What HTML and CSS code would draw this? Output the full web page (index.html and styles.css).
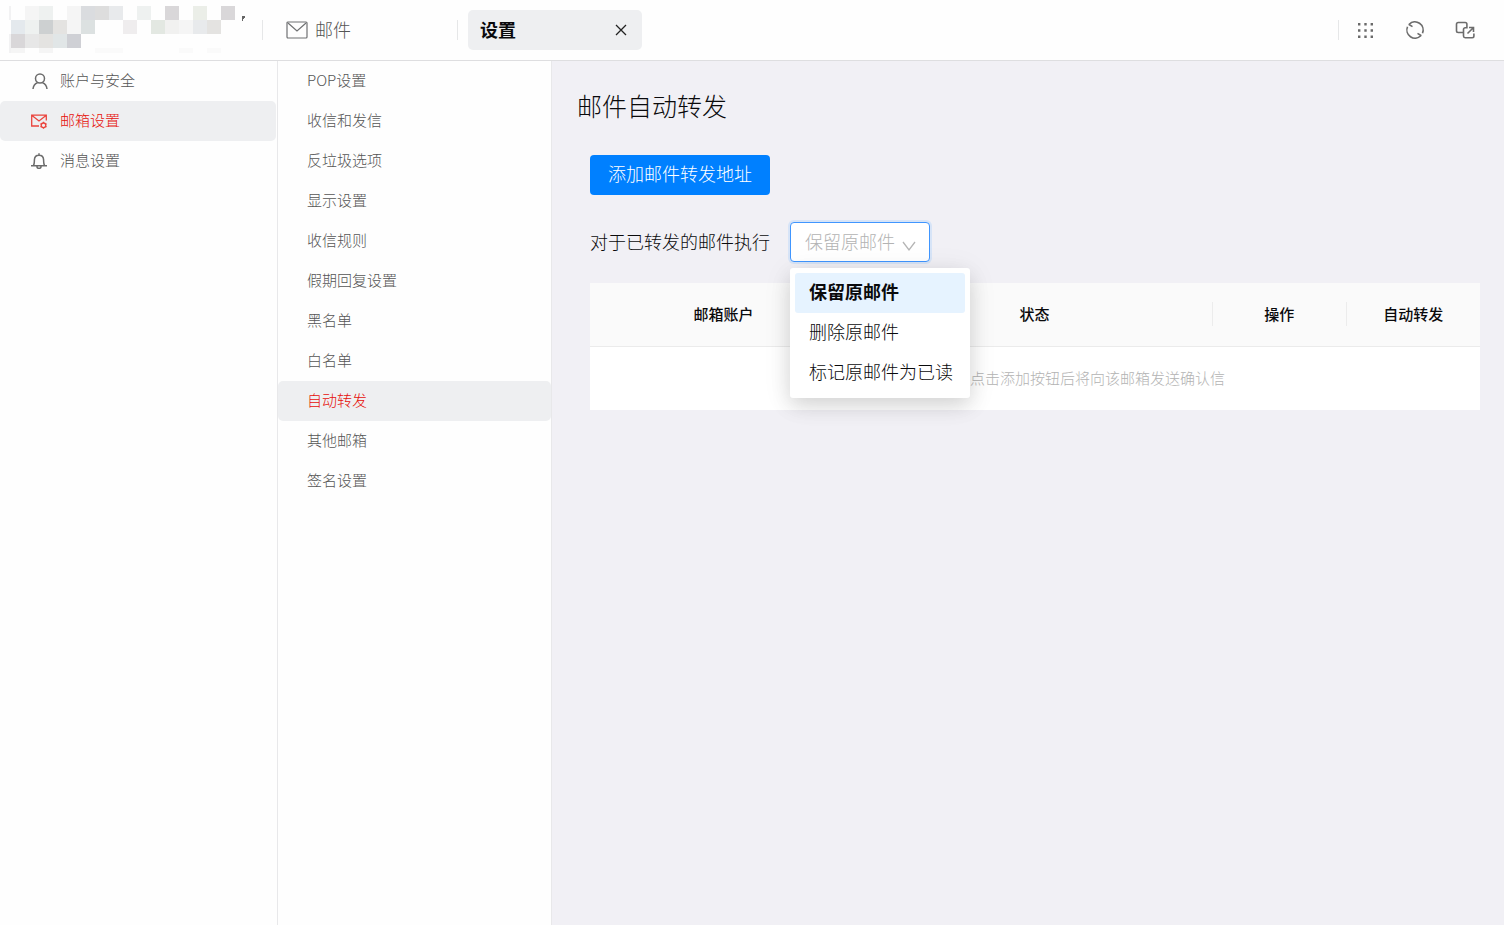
FILE: index.html
```html
<!DOCTYPE html>
<html lang="zh-CN">
<head>
<meta charset="utf-8">
<meta name="viewport" content="width=device-width, initial-scale=1">
<title>邮件自动转发</title>
<link rel="stylesheet" href="styles.css">
</head>
<body>
<header class="topbar">
  <div class="brand">
    <svg class="brand-logo" width="240" height="48" viewBox="0 0 240 48" shape-rendering="crispEdges" aria-hidden="true">
      <path fill="#f2f2f3" d="M0 0h2v14H0zM0 28h2v19H0z"/>
      <path fill="#f5f5f5" d="M16 0h14v14H16zM58 0h14v28H58zM170 14h14v14H170zM2 42h14v5H2zM30 42h14v5H30z"/>
      <path fill="#eef1f0" d="M30 0h14v14H30zM128 0h14v14H128zM16 14h14v14H16z"/>
      <path fill="#dadcdf" d="M72 0h14v14H72z"/>
      <path fill="#dddddd" d="M86 0h14v14H86z"/>
      <path fill="#e8eaec" d="M100 0h14v14H100zM184 14h14v14H184z"/>
      <path fill="#d9d7d9" d="M156 0h14v14H156zM212 0h14v14H212zM2 28h14v14H2z"/>
      <path fill="#ebeee8" d="M184 0h14v14H184z"/>
      <path fill="#e4e9ed" d="M2 14h14v14H2z"/>
      <path fill="#cdd0d1" d="M30 14h14v14H30z"/>
      <path fill="#e4e3e1" d="M44 14h14v14H44zM30 28h14v14H30zM198 14h14v14H198z"/>
      <path fill="#dce1e1" d="M72 14h14v14H72z"/>
      <path fill="#efedee" d="M114 14h14v14H114z"/>
      <path fill="#e3e8e2" d="M142 14h14v14H142z"/>
      <path fill="#f1f1f0" d="M156 14h14v14H156z"/>
      <path fill="#e7e7e7" d="M16 28h14v14H16z"/>
      <path fill="#e1e6e7" d="M44 28h14v14H44z"/>
      <path fill="#cfd0d5" d="M58 28h14v14H58z"/>
      <path fill="#fafafa" d="M86 42h28v5H86zM170 42h14v5H170zM198 42h14v5H198z"/>
      <path fill="#666" d="M233 10h3v2h-1v1h-1v2h-1z"/>
    </svg>
  </div>
  <nav class="tabs" aria-label="标签页">
    <button class="tab" type="button">
      <svg width="22" height="18" viewBox="0 0 22 18" fill="none" stroke="#6f7072" stroke-width="1.2" aria-hidden="true"><rect x="1" y="1" width="20" height="16" rx="1"/><path d="M2 2l9 8 9-8"/></svg>
      <span class="tab-label">邮件</span>
    </button>
    <div class="tab-current">
      <span class="tab-label">设置</span>
      <button class="tab-close" type="button" aria-label="关闭">
        <svg width="12" height="12" viewBox="0 0 12 12" stroke="#222" stroke-width="1.3" aria-hidden="true"><path d="M1 1l10 10M11 1L1 11"/></svg>
      </button>
    </div>
  </nav>
  <div class="tools">
    <button class="tool" type="button" aria-label="应用">
      <svg width="20" height="20" viewBox="0 0 20 20" fill="#6a6a6a" aria-hidden="true"><path d="M3 3h2.400v2.400H3zM9.300 3h2.400v2.400H9.300zM15.600 3H18v2.400h-2.400zM3 9.300h2.400v2.400H3zM9.300 9.300h2.400v2.400H9.300zM15.600 9.300H18v2.400h-2.400zM3 15.600h2.400V18H3zM9.300 15.600h2.400V18H9.300zM15.600 15.600H18V18h-2.400z"/></svg>
    </button>
    <button class="tool" type="button" aria-label="刷新">
      <svg width="20" height="20" viewBox="0 0 20 20" fill="none" stroke="#6c6c6c" stroke-width="1.600" aria-hidden="true"><path d="M4.200 4.200A8.200 8.200 0 0 1 17.500 13.200M15.800 15.800A8.200 8.200 0 0 1 2.500 6.800"/><path d="M3.600 4.300L7.500 6.600M16.400 15.700L12.500 13.400"/></svg>
    </button>
    <button class="tool" type="button" aria-label="切换窗口">
      <svg width="20" height="20" viewBox="0 0 20 20" fill="none" stroke="#6c6c6c" stroke-width="1.600" aria-hidden="true"><path d="M8 12.500H3.200A1.700 1.700 0 0 1 1.500 10.800V4.200A1.700 1.700 0 0 1 3.200 2.500h7A1.700 1.700 0 0 1 11.900 4.200V7.700H10.200A1.700 1.700 0 0 0 8.500 9.400v6.600A1.700 1.700 0 0 0 10.200 17.700h7a1.700 1.700 0 0 0 1.700-1.700V13.500"/><path d="M12.500 13.500L18.300 7.700M14 7.500h4.500V12"/></svg>
    </button>
  </div>
</header>
<div class="workspace">
  <nav class="sidebar sidebar-main" aria-label="设置分类">
    <a class="item" href="#account">
      <svg width="18" height="18" viewBox="0 0 18 18" fill="none" stroke="#6c6c6c" stroke-width="1.500" aria-hidden="true"><circle cx="10" cy="7.500" r="4.500"/><path d="M3 18c.4-3.500 2-5.300 4.500-6.200M17 18c-.4-3.500-2-5.300-4.500-6.200"/></svg>
      <span>账户与安全</span>
    </a>
    <a class="item item-active" href="#mailbox" aria-current="true">
      <svg width="18" height="18" viewBox="0 0 18 18" fill="none" stroke="#ea443d" stroke-width="1.300" aria-hidden="true"><path d="M9 15H1.700V4.200h14.600V9.500M2 4.500l7 5.500 7-5.500"/><circle cx="13.500" cy="14.300" r="2.300"/><path d="M13.500 10.800v1.200M13.500 16.600v1.200M10.500 12.600l1 .6M15.500 15.400l1 .6M16.500 12.600l-1 .6M11.500 15.400l-1 .6"/></svg>
      <span>邮箱设置</span>
    </a>
    <a class="item" href="#message">
      <svg width="18" height="18" viewBox="0 0 18 18" fill="none" stroke="#6c6c6c" stroke-width="1.500" aria-hidden="true"><path d="M1 14.800h16M3.500 14.500c1-1.500.8-3.500.9-5.600C4.500 6 6.500 4.200 9 4.200s4.500 1.800 4.600 4.700c.1 2.100-.1 4.100.9 5.600M9 2.200v2M6.800 15.500c.3 1.300 1.100 2 2.200 2s1.900-.7 2.200-2"/></svg>
      <span>消息设置</span>
    </a>
  </nav>
  <nav class="sidebar sidebar-sub" aria-label="邮箱设置">
    <a class="item" href="#pop">POP设置</a>
    <a class="item" href="#send">收信和发信</a>
    <a class="item" href="#spam">反垃圾选项</a>
    <a class="item" href="#display">显示设置</a>
    <a class="item" href="#rules">收信规则</a>
    <a class="item" href="#vacation">假期回复设置</a>
    <a class="item" href="#black">黑名单</a>
    <a class="item" href="#white">白名单</a>
    <a class="item item-active" href="#forward" aria-current="page">自动转发</a>
    <a class="item" href="#others">其他邮箱</a>
    <a class="item" href="#sign">签名设置</a>
  </nav>
  <main class="content">
    <h1 class="title">邮件自动转发</h1>
    <div class="panel">
      <button class="primary" type="button">添加邮件转发地址</button>
      <div class="field">
        <label class="field-label" for="action">对于已转发的邮件执行</label>
        <div class="picker">
          <select class="picker-select" id="action"><option>保留原邮件</option></select>
          <svg class="picker-arrow" width="14" height="14" viewBox="0 0 14 14" fill="none" stroke="#b5b5b5" stroke-width="1.300" aria-hidden="true"><path d="M1 3l6 8 6-8"/></svg>
          <div class="menu" role="listbox" aria-label="对于已转发的邮件执行">
            <button class="option option-selected" type="button" role="option" aria-selected="true">保留原邮件</button>
            <button class="option" type="button" role="option" aria-selected="false">删除原邮件</button>
            <button class="option" type="button" role="option" aria-selected="false">标记原邮件为已读</button>
          </div>
        </div>
      </div>
      <table class="table">
        <colgroup><col class="col-account"><col class="col-status"><col class="col-small"><col class="col-small"></colgroup>
        <thead>
          <tr>
            <th scope="col"><div class="head">邮箱账户</div></th>
            <th scope="col"><div class="head head-split">状态</div></th>
            <th scope="col"><div class="head head-split">操作</div></th>
            <th scope="col"><div class="head">自动转发</div></th>
          </tr>
        </thead>
        <tbody>
          <tr><td class="empty" colspan="4">点击添加按钮后将向该邮箱发送确认信</td></tr>
        </tbody>
      </table>
    </div>
  </main>
</div>
</body>
</html>
```
FILE: styles.css
```css
* { box-sizing: border-box; }

body {
  margin: 0;
  min-height: 100vh;
  display: flex;
  flex-direction: column;
  background: #fefefe;
  color: #0a0a0c;
  font-family: "Noto Sans CJK SC", sans-serif;
  font-size: 15px;
  font-weight: 300;
}

button, select {
  font: inherit;
  color: inherit;
  border: 0;
  padding: 0;
  background: none;
}

svg { display: block; flex: none; }

.topbar {
  display: flex;
  align-items: center;
  height: 61px;
  border-bottom: 1px solid #dedee0;
}

.brand {
  width: 262px;
  padding: 6px 9px;
  flex: none;
}

.tabs {
  display: flex;
  align-items: center;
  flex: 1;
  font-size: 18px;
}

.tab {
  display: flex;
  align-items: center;
  gap: 7px;
  width: 196px;
  height: 20px;
  padding-left: 23px;
  border-left: 1px solid #e6e7e8;
  border-right: 1px solid #e6e7e8;
  color: #555;
}

.tab-label { padding-bottom: 2px; }

.tab-current {
  display: flex;
  align-items: center;
  justify-content: space-between;
  width: 174px;
  height: 40px;
  margin-left: 10px;
  padding: 0 15px 0 12px;
  border-radius: 5px;
  background: #eeeff1;
  font-weight: 700;
}

.tools {
  display: flex;
  gap: 30px;
  padding: 0 29px 0 16px;
  border-left: 1px solid #e6e7e8;
}

.workspace {
  display: flex;
  flex: 1;
}

.sidebar {
  flex: none;
  border-right: 1px solid #e8e8ea;
}

.sidebar-main { width: 278px; padding-right: 1px; }
.sidebar-sub { width: 274px; }

.item {
  display: flex;
  align-items: center;
  gap: 12px;
  height: 40px;
  padding: 0 30px 3px;
  border-radius: 5px;
  color: #555;
  text-decoration: none;
}

.sidebar-sub .item { padding-left: 29px; }

.sidebar .item-active {
  background: #eeeff1;
  color: #e60f0a;
}

.content {
  flex: 1;
  min-width: 0;
  padding: 24px 24px 24px 25px;
  background: #f1f0f5;
}

.title {
  margin: 0;
  font-size: 25px;
  line-height: 40px;
  font-weight: 300;
}

.panel { padding: 30px 0 0 13px; }

.primary {
  width: 180px;
  height: 40px;
  padding-bottom: 4px;
  border-radius: 4px;
  background: #0080ff;
  color: #fff;
  font-size: 18px;
  white-space: nowrap;
}

.field {
  display: flex;
  align-items: center;
  gap: 20px;
  margin: 27px 0 21px;
  font-size: 18px;
}

.field-label { padding-bottom: 2px; }

.picker {
  position: relative;
  width: 140px;
}

.picker-select {
  display: block;
  width: 100%;
  height: 40px;
  padding: 0 14px 2px;
  appearance: none;
  border: 1px solid #4096ff;
  border-radius: 4px;
  background: #fff;
  box-shadow: 0 0 0 2px #d7e4f7;
  color: #b3b3b3;
}

.picker-arrow {
  position: absolute;
  right: 14px;
  top: 17px;
  pointer-events: none;
}

.menu {
  position: absolute;
  top: 46px;
  left: 0;
  z-index: 1;
  width: 180px;
  padding: 5px;
  border-radius: 3px;
  background: #fff;
  box-shadow: 0 8px 20px rgba(0, 0, 0, 0.12), 0 4px 30px rgba(0, 0, 0, 0.08);
}

.option {
  display: block;
  width: 100%;
  height: 40px;
  padding: 0 0 4px 14px;
  border-radius: 3px;
  text-align: left;
  white-space: nowrap;
}

.option-selected {
  background: #e6f3ff;
  font-weight: 700;
}

.table {
  width: 100%;
  table-layout: fixed;
  border-collapse: separate;
  border-spacing: 0;
  background: #fff;
}

.col-account { width: 30%; }
.col-status { width: 40%; }
.col-small { width: 15%; }

.table th {
  height: 64px;
  padding: 0 0 2px;
  border-bottom: 1px solid #ebebeb;
  background: #fafafa;
  font-weight: 500;
}

.head { line-height: 24px; }
.head-split { border-right: 1px solid #ececec; }

.empty {
  height: 63px;
  padding: 0 0 2px 125px;
  color: #b3b3b3;
  text-align: center;
}
```
